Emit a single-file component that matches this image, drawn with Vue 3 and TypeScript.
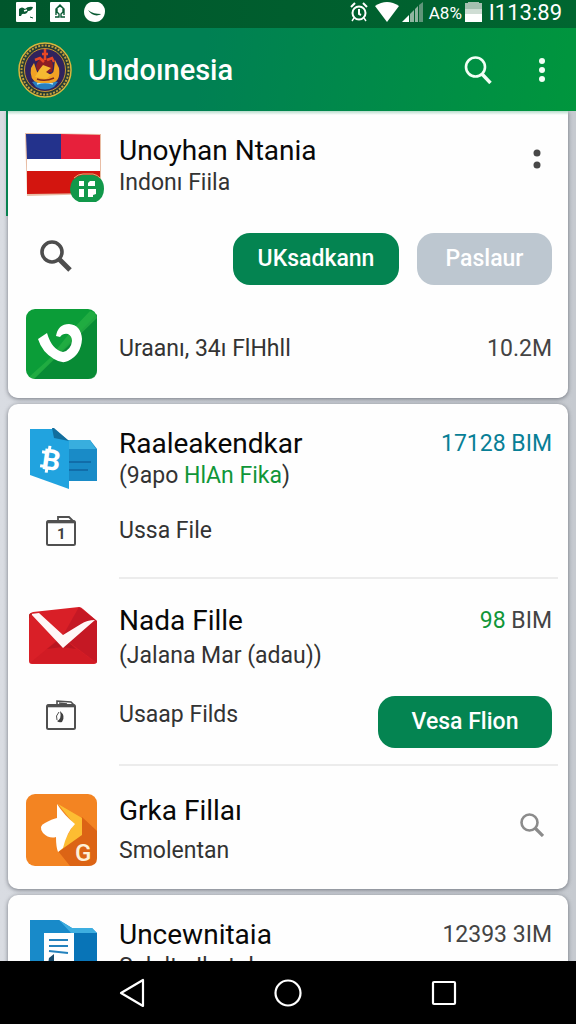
<script setup lang="ts">
interface Amount {
  value: string
  unit: string
  tone: 'teal' | 'green' | 'plain'
}

const transferAmount: Amount = { value: '17128', unit: 'BIM', tone: 'teal' }
const mailAmount: Amount = { value: '98', unit: 'BIM', tone: 'green' }
const docAmount: Amount = { value: '12393', unit: '3IM', tone: 'plain' }
</script>

<template>
  <div class="screen">
    <div class="status">
      <svg width="20" height="20" viewBox="0 0 20 20" aria-hidden="true">
        <rect width="20" height="20" rx="1" fill="#fff" />
        <path d="M3 7q3-3 6 0 3-3 8-2-1 4-5 4-1 3-4 3-2-1-3 2H3z" fill="#0a5a34" />
        <path d="M8 9l3-1" stroke="#fff" stroke-width="1.500" />
        <path d="M14 15l3 1" stroke="#0a5a34" stroke-width="1" />
      </svg>
      <svg width="20" height="20" viewBox="0 0 20 20" aria-hidden="true">
        <rect width="20" height="20" rx="1" fill="#fff" />
        <path d="M5 15h4v-3l-2-2V6l3-2 3 2v4l-2 2v3h4M6 13V7l4-4 4 4v6" fill="none" stroke="#0a5a34" stroke-width="1.400" />
      </svg>
      <svg width="21" height="20" viewBox="0 0 21 20" aria-hidden="true">
        <path d="M7 0h7c4 1 7 5 7 9 0 6-4 11-10 11C5 20 0 16 0 10 0 5 3 1 7 0z" fill="#fff" />
        <path d="M4 8c4 3 8 4 13 4-4 3-10 1-13-4z" fill="#0a5a34" />
      </svg>
      <span class="spacer"></span>
      <svg width="18" height="20" viewBox="0 0 18 20" fill="none" stroke="#fff" stroke-width="2" aria-hidden="true">
        <circle cx="9" cy="11" r="6.500" />
        <path d="M1 5l4-4M17 5l-4-4M9 7v5l2 1" />
        <path d="M4 16l-2 3M14 16l2 3" stroke-width="1.400" />
      </svg>
      <svg class="wifi" width="24" height="20" viewBox="0 0 24 20" aria-hidden="true">
        <path d="M0 4Q12-4 24 4L12 20z" fill="#fff" />
      </svg>
      <svg class="signal" width="21" height="20" viewBox="0 0 21 20" aria-hidden="true">
        <path d="M0 20h7v-7z" fill="#fff" />
        <path d="M8 20v-8l4-4v12zM13 20V7l3-3v16z" fill="#8fb5a0" />
        <path d="M17 20V3l4-3v20z" fill="#5f957a" />
      </svg>
      <span class="battery-text">A8%</span>
      <svg width="17" height="20" viewBox="0 0 17 20" aria-hidden="true">
        <path d="M3 0h11v1h3v11H0V1h3z" fill="#a5c0b0" />
        <path d="M0 7h17v5H0z" fill="#cfddd4" />
        <path d="M0 12h17v8H0z" fill="#fff" />
      </svg>
      <span class="clock">I113:89</span>
    </div>

    <header class="appbar">
      <svg class="emblem" width="54" height="56" viewBox="0 0 54 56" aria-hidden="true">
        <ellipse cx="27" cy="28" rx="26" ry="27" fill="#273a35" stroke="#d9b63c" stroke-width="1.500" />
        <ellipse cx="27" cy="28" rx="23.500" ry="24.500" fill="none" stroke="#bfa03a" stroke-width="2" stroke-dasharray="2 1.400" />
        <ellipse cx="27" cy="28" rx="20.500" ry="21.500" fill="#30235c" stroke="#c99730" stroke-width="1" />
        <path d="M14 40q13-4 26 0l-4 5q-9 5-18 0z" fill="#297fc0" />
        <path d="M19 42q8-3 16 0" fill="none" stroke="#b5e5ef" stroke-width="1.500" />
        <path d="M13 26l3-5 2 6q1 6 9 6 9 0 9-6l1-9 4 8q2 14-8 15H20q-9-3-7-15z" fill="#f0a224" />
        <path d="M18 24q2-8 9-8t8 8l-1 6-6 1-9-3z" fill="#8c1f24" />
        <path d="M21 28l4-5 8 3-5 4 5 3-5 4-11-2z" fill="#f5ba32" />
        <path d="M27 7v11M24 12h6M17 18l5-2 4 4M29 18l5-2 2 4" stroke="#e94825" stroke-width="2.500" fill="none" />
        <path d="M19 37q8 3 17-1" stroke="#7b271d" stroke-width="1.500" fill="none" />
      </svg>
      <h1>Undoınesia</h1>
      <span class="spacer"></span>
      <button class="icon-btn" type="button" aria-label="Search">
        <svg width="28" height="28" viewBox="0 0 28 28" fill="none" stroke="#f2fff6">
          <circle cx="11.500" cy="11" r="9.500" stroke-width="2.600" />
          <path d="M18 18l8.500 9" stroke-width="3.400" />
        </svg>
      </button>
      <button class="icon-btn more" type="button" aria-label="More options">
        <svg width="6" height="26" viewBox="0 0 6 26" fill="#f2fff6">
          <circle cx="3" cy="4" r="3" /><circle cx="3" cy="13" r="3" /><circle cx="3" cy="22" r="3" />
        </svg>
      </button>
    </header>

    <main class="content">
      <section class="card first">
        <div class="row">
          <div class="lead">
            <svg class="flag" width="80" height="72" viewBox="0 0 80 72" aria-hidden="true">
              <path d="M0 0l76 1v60L2 63z" fill="#e8bda5" />
              <path d="M1 1h35v25H2z" fill="#23328c" />
              <path d="M36 1l39 1v24H36z" fill="#e7203b" />
              <path d="M2 26h73v12H2z" fill="#fff" />
              <path d="M2 38h73v22L2 61z" fill="#d3150f" />
              <path d="M57 42h11q11 2 11 14 0 9-8 13H54q-9-4-9-13 1-12 12-14z" fill="#11984a" />
              <path d="M49 45q4-4 9-4h10q5 1 7 4" fill="none" stroke="#d9b878" stroke-width="1" />
              <path d="M54 48h5v5h-5zM54 56h5v8h-5zM63 50l2-2h5v5h-7zM63 56h8v5l-3 1v2h-5z" fill="#fff" />
            </svg>
          </div>
          <div class="texts">
            <h2>Unoyhan Ntania</h2>
            <p>Indonı Fiila</p>
          </div>
          <button class="icon-btn two" type="button" aria-label="Item options">
            <svg width="8" height="20" viewBox="0 0 8 20" fill="#484848">
              <circle cx="4" cy="4" r="3.500" /><circle cx="4" cy="16" r="3.500" />
            </svg>
          </button>
        </div>
        <div class="row actions">
          <button class="icon-btn lookup" type="button" aria-label="Find">
            <svg width="32" height="32" viewBox="0 0 32 32" fill="none" stroke="#4d4d4d">
              <circle cx="12" cy="12" r="10" stroke-width="3.600" />
              <path d="M19 19l11 11" stroke-width="5" />
            </svg>
          </button>
          <span class="spacer"></span>
          <button class="pill wide" type="button">UKsadkann</button>
          <button class="pill muted" type="button">Paslaur</button>
        </div>
        <div class="row media">
          <div class="lead">
            <svg width="72" height="72" viewBox="0 0 72 72" aria-hidden="true">
              <rect x="1" y="1" width="71" height="70" rx="9" fill="#0b9d38" />
              <path d="M72 6v56q0 9-9 9H9L72 6z" fill="#078735" opacity=".8" />
              <path d="M47 22L65 3q6 1 7 7L9 71 4 69l20-18z" fill="#2fb548" opacity=".6" />
              <path d="M13 31l9-6q5 17 16 19 8-2 9-11 0-5-4-7-5-1-8 3l-4-1q2-12 13-12 12 1 13 15-1 16-14 22-6 3-14-2-12-7-16-20z" fill="#fff" />
            </svg>
          </div>
          <p class="grow">Uraanı, 34ı FlHhll</p>
          <span class="amount">10.2M</span>
        </div>
      </section>

      <section class="card">
        <div class="row">
          <div class="lead">
            <svg class="nudge" width="70" height="62" viewBox="0 0 70 62" aria-hidden="true">
              <path d="M38 12h23l7 9v32H38z" fill="#198bc7" />
              <path d="M38 12h23l6 9H38z" fill="#38aede" />
              <path d="M39 34h23M39 42h20" stroke="#116da9" stroke-width="2" />
              <path d="M1 1h24l15 12v48L1 47z" fill="#21a3df" />
              <path d="M23 0h2l15 13-15-3z" fill="#126e9d" />
              <g transform="rotate(8 21 32)">
                <text x="13" y="42" class="glyph b">B</text>
                <path d="M19 18v6M19 40v5M12 25h6M12 39h6" stroke="#fff" stroke-width="3" />
              </g>
            </svg>
          </div>
          <div class="texts">
            <h2>Raaleakendkar</h2>
            <p>(9apo <span class="green">HlAn Fika</span>)</p>
          </div>
          <span class="amount top" :class="transferAmount.tone">{{ transferAmount.value }} {{ transferAmount.unit }}</span>
        </div>
        <div class="row file">
          <div class="lead small">
            <svg width="32" height="32" viewBox="0 0 32 32" fill="none" stroke="#505050" aria-hidden="true">
              <rect x="2" y="6" width="28" height="24" rx="1.500" stroke-width="2" />
              <path d="M2 7h28" stroke-width="2.600" />
              <path d="M13 5V2h11l4 4" stroke-width="1.800" />
              <text x="12" y="24" class="glyph digit">1</text>
            </svg>
          </div>
          <p>Ussa File</p>
        </div>
        <hr>
        <div class="row mail">
          <div class="lead">
            <svg class="nudge" width="70" height="60" viewBox="0 0 70 60" aria-hidden="true">
              <path d="M0 9q0-3 4-4L50 0q2 0 4 2l14 12v40q0 3-3 3H3q-3 0-3-3z" fill="#d91f27" />
              <path d="M50 0L33 30l35 26V14z" fill="#bd1724" opacity=".75" />
              <path d="M1 56l31-26 35 26z" fill="#d11b24" />
              <path d="M18 42l15-12 14 12-14-2z" fill="#a81420" opacity=".6" />
              <path d="M2 7l8-1 24 22 18-11q6-4 14-4L34 41z" fill="#fff7f7" />
              <path d="M3 7q-3 0-3 4" fill="none" stroke="#ba2020" stroke-width="1.500" />
            </svg>
          </div>
          <div class="texts loose">
            <h2>Nada Fille</h2>
            <p>(Jalana Mar (adau))</p>
          </div>
          <span class="amount top"><span :class="mailAmount.tone">{{ mailAmount.value }}</span> {{ mailAmount.unit }}</span>
        </div>
        <div class="row upload">
          <div class="lead small">
            <svg width="32" height="32" viewBox="0 0 32 32" fill="none" stroke="#505050" aria-hidden="true">
              <rect x="2" y="6" width="28" height="24" rx="1.500" stroke-width="2" />
              <path d="M2 7h28" stroke-width="2.600" />
              <path d="M12 5V2l14 1 3 3M14 4l8 1" stroke-width="1.600" />
              <path d="M15 12q6 5 2 11-3 1-5-1 5-2 3-10z" fill="#404040" stroke="none" />
              <path d="M14 13q-4 4-2 8" stroke-width="1" />
            </svg>
          </div>
          <p class="grow">Usaap Filds</p>
          <button class="pill widest" type="button">Vesa Flion</button>
        </div>
        <hr>
        <div class="row shop">
          <div class="lead">
            <svg width="72" height="74" viewBox="0 0 72 74" aria-hidden="true">
              <rect x="1" y="1" width="71" height="72" rx="9" fill="#f38422" />
              <path d="M57 24l15 14v27q0 8-9 8H45L33 58z" fill="#dc6415" />
              <path d="M33 11l24 14v17L33 59l16-28z" fill="#fdbd32" />
              <path d="M32 11q7 11 18 20-8 8-12 24l-5 4q-2-5-2-15-7 2-13-4-5-7 2-10 7-4 12-5z" fill="#fff" />
              <text x="50" y="68" class="glyph g">G</text>
            </svg>
          </div>
          <div class="texts looser">
            <h2>Grka Fillaı</h2>
            <p>Smolentan</p>
          </div>
          <button class="icon-btn find" type="button" aria-label="Search Grka Fillaı">
            <svg width="24" height="24" viewBox="0 0 24 24" fill="none" stroke="#8b8b8b">
              <circle cx="9.500" cy="9.500" r="8" stroke-width="2.600" />
              <path d="M15 15l8 8" stroke-width="3.200" />
            </svg>
          </button>
        </div>
      </section>

      <section class="card last">
        <div class="row">
          <div class="lead">
            <svg class="nudge" width="70" height="62" viewBox="0 0 70 62" aria-hidden="true">
              <path d="M1 1h29l13 8h20l5 5v48H1z" fill="#1689cc" />
              <path d="M1 1h29l10 12v49H1z" fill="#188ac9" />
              <path d="M30 1l13 8h20l5 5H42z" fill="#3daee0" />
              <path d="M45 14h23v48H45z" fill="#0874b7" />
              <path d="M15 14h30v48H15z" fill="#fff" />
              <path d="M20 21h19M20 27h19M20 32l19 2" stroke="#2482bd" stroke-width="2" />
              <path d="M20 39l5-4v10h-6z" fill="#184b6b" />
            </svg>
          </div>
          <div class="texts">
            <h2>Uncewnitaia</h2>
            <p>Sololtu Ihotokor</p>
          </div>
          <span class="amount top">{{ docAmount.value }} {{ docAmount.unit }}</span>
        </div>
      </section>
    </main>

    <nav class="navbar" aria-label="System">
      <button type="button" aria-label="Back">
        <svg width="28" height="30" viewBox="0 0 28 30" fill="none" stroke="#fff" stroke-width="2.200" stroke-linejoin="round">
          <path d="M25 2v26L3 15z" />
        </svg>
      </button>
      <button type="button" aria-label="Home">
        <svg width="28" height="28" viewBox="0 0 28 28" fill="none" stroke="#fff" stroke-width="2.200">
          <circle cx="14" cy="14" r="12.500" />
        </svg>
      </button>
      <button type="button" aria-label="Recent apps">
        <svg width="26" height="26" viewBox="0 0 26 26" fill="none" stroke="#fff" stroke-width="2.200">
          <rect x="2" y="2" width="22" height="22" rx="1" />
        </svg>
      </button>
    </nav>
  </div>
</template>

<style>
body {
  margin: 0;
}
</style>

<style scoped>
.screen {
  display: flex;
  flex-direction: column;
  height: 100vh;
  overflow: hidden;
  background: linear-gradient(90deg, #d9dce2, #c6cad0);
  font-family: Roboto, "Liberation Sans", sans-serif;
  color: #333;
}
svg {
  display: block;
  flex: none;
}
h1,
h2,
p {
  margin: 0;
  white-space: nowrap;
}
button {
  border: 0;
  padding: 0;
  background: none;
  font-family: inherit;
  cursor: pointer;
}
.spacer,
.grow {
  flex: 1;
}
.status {
  display: flex;
  align-items: center;
  height: 28px;
  flex: none;
  box-sizing: border-box;
  padding: 0 14px 4px 16px;
  gap: 14px;
  background: linear-gradient(90deg, #00562c, #006630);
  color: #fff;
}
.wifi {
  margin-left: -7px;
}
.signal {
  margin-left: -11px;
}
.battery-text {
  font-size: 17px;
  line-height: 24px;
  margin: 2px -11px 0 -8px;
}
.clock {
  font-size: 22px;
  line-height: 24px;
  margin: 2px 0 0 -7px;
}
.appbar {
  display: flex;
  align-items: center;
  height: 83px;
  flex: none;
  box-sizing: border-box;
  padding: 0 22px 0 18px;
  background: linear-gradient(100deg, #008053 0%, #008053 35%, #00963d 100%);
  color: #fff;
}
h1 {
  margin-left: 16px;
  font-size: 29px;
  line-height: 36px;
  font-weight: 500;
}
.icon-btn {
  display: flex;
  align-items: center;
  justify-content: center;
}
.appbar .icon-btn {
  width: 40px;
  height: 48px;
}
.appbar .more {
  width: 24px;
  margin-left: 32px;
}
.content {
  flex: 1;
  min-height: 0;
  overflow: hidden;
  padding: 0 8px;
  display: flex;
  flex-direction: column;
  gap: 6px;
}
.card {
  position: relative;
  flex: none;
  box-sizing: border-box;
  padding: 24px 16px 22px 17px;
  background: #fefefe;
  border-radius: 10px;
  box-shadow: 0 1px 4px rgba(50, 55, 65, 0.6);
}
.card.first {
  padding-top: 22px;
  padding-bottom: 18px;
  border-radius: 0 0 10px 10px;
  background: linear-gradient(#b5dccb, #fefefe 4px);
}
.first::before {
  content: "";
  position: absolute;
  left: -2px;
  top: 0;
  width: 2px;
  height: 105px;
  background: #078250;
}
.row {
  display: flex;
  align-items: flex-start;
}
.lead {
  width: 94px;
  flex: none;
}
.nudge {
  margin-left: 4px;
}
.mail .nudge {
  margin-top: 2px;
}
.small svg {
  margin-left: 20px;
}
.texts {
  flex: 1;
  min-width: 0;
}
.first .texts {
  padding-top: 2px;
}
h2 {
  font-size: 28px;
  line-height: 32px;
  font-weight: 400;
  color: #080808;
}
p {
  font-size: 23px;
  line-height: 32px;
}
.loose p {
  margin-top: 3px;
}
.looser {
  padding-top: 2px;
}
.looser p {
  margin-top: 8px;
}
.amount {
  font-size: 23px;
  line-height: 32px;
  color: #444;
  white-space: nowrap;
}
.green,
.amount .green {
  color: #109638;
}
.amount.teal {
  color: #087f96;
}
.two {
  width: 30px;
  height: 52px;
}
.actions {
  align-items: center;
  gap: 18px;
  margin-top: 27px;
}
.lookup {
  width: 62px;
  height: 48px;
  margin-bottom: 6px;
}
.pill {
  height: 52px;
  min-width: 135px;
  border-radius: 17px;
  background: #048451;
  color: #fff;
  font-size: 23px;
  line-height: 28px;
  font-weight: 500;
}
.wide {
  min-width: 166px;
}
.widest {
  min-width: 174px;
}
.muted {
  background: #bdc7d0;
}
.media {
  align-items: center;
  margin-top: 22px;
}
.media p,
.media .amount {
  padding-top: 10px;
}
.file {
  margin-top: 23px;
}
hr {
  border: 0;
  height: 2px;
  margin: 30px -6px 0 94px;
  background: #ececec;
}
.mail {
  margin-top: 26px;
}
.upload {
  margin-top: 24px;
}
.upload .small,
.upload p {
  padding-top: 3px;
}
.upload + hr {
  margin-top: 16px;
}
.shop {
  margin-top: 27px;
}
.find {
  width: 40px;
  height: 64px;
}
.glyph {
  fill: #fff;
  stroke: none;
  font-weight: 700;
}
.b {
  font-size: 29px;
}
.digit {
  font-size: 15px;
  fill: #404040;
}
.g {
  font-size: 24px;
  font-weight: 500;
  fill: #fff0d8;
}
.navbar {
  display: flex;
  align-items: center;
  justify-content: center;
  gap: 108px;
  height: 63px;
  flex: none;
  background: #000;
}
.navbar button {
  display: flex;
  align-items: center;
  justify-content: center;
  width: 48px;
  height: 48px;
}
</style>
